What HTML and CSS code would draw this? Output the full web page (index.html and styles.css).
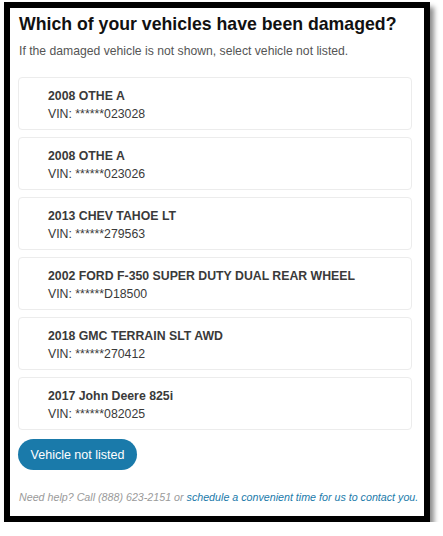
FILE: index.html
```html
<!DOCTYPE html>
<html lang="en">
<head>
	<meta charset="utf-8">
	<title>Damaged vehicles</title>
	<link rel="stylesheet" href="styles.css">
</head>
<body>
	<div id="frame">
		<h1 class="title">Which of your vehicles have been damaged?</h1>
		<p class="hint">If the damaged vehicle is not shown, select vehicle not listed.</p>
		<ul class="vehicle-list">
			<li class="vehicle">
				<p class="vehicle-name">2008 OTHE A</p>
				<p class="vehicle-vin">VIN: ******023028</p>
			</li>
			<li class="vehicle">
				<p class="vehicle-name">2008 OTHE A</p>
				<p class="vehicle-vin">VIN: ******023026</p>
			</li>
			<li class="vehicle">
				<p class="vehicle-name">2013 CHEV TAHOE LT</p>
				<p class="vehicle-vin">VIN: ******279563</p>
			</li>
			<li class="vehicle">
				<p class="vehicle-name">2002 FORD F-350 SUPER DUTY DUAL REAR WHEEL</p>
				<p class="vehicle-vin">VIN: ******D18500</p>
			</li>
			<li class="vehicle">
				<p class="vehicle-name">2018 GMC TERRAIN SLT AWD</p>
				<p class="vehicle-vin">VIN: ******270412</p>
			</li>
			<li class="vehicle">
				<p class="vehicle-name">2017 John Deere 825i</p>
				<p class="vehicle-vin">VIN: ******082025</p>
			</li>
		</ul>
		<button class="not-listed" type="button">Vehicle not listed</button>
		<p class="help">Need help? Call (888) 623-2151 or <a href="#">schedule a convenient time for us to contact you.</a></p>
	</div>
</body>
</html>
```

FILE: styles.css
```css
body {
	margin: 0;
	padding: 2px 0 0 4px;
	font-family: "Liberation Sans", Arial, sans-serif;
	background: #fff;
}
#frame {
	width: 394px;
	height: 508px;
	border: 6px solid #000;
	box-shadow: 4px 5px 5px rgba(0, 0, 0, 0.45);
	padding: 0 12px 0 8px;
}
.title {
	font-size: 17.7px;
	font-weight: bold;
	color: #111;
	margin: 5px 0 0 1px;
	line-height: 22px;
}
.hint {
	font-size: 12.2px;
	color: #555;
	margin: 8px 0 0 1px;
	line-height: 16px;
}
.vehicle-list {
	list-style: none;
	margin: 18px 0 0;
	padding: 0;
}
.vehicle {
	border: 1px solid #ececec;
	border-radius: 4px;
	padding: 9px 30px 9px 29px;
	margin-bottom: 7px;
	height: 33px;
}
.vehicle p {
	margin: 0;
	font-size: 12.3px;
	line-height: 18px;
	color: #3a3a3a;
}
.vehicle-name {
	font-weight: bold;
}
.vehicle-vin {
	color: #555;
}
.not-listed {
	margin-top: 2px;
	background: #1a7aaa;
	color: #fff;
	border: none;
	border-radius: 16px;
	height: 31px;
	width: 119px;
	padding: 0;
	font-family: "Liberation Sans", Arial, sans-serif;
	font-size: 12.5px;
}
.help {
	font-size: 10.7px;
	font-style: italic;
	color: #9a9a9a;
	margin: 21px 0 0 1px;
	white-space: nowrap;
}
.help a {
	color: #1a7aaa;
	text-decoration: none;
}
```
